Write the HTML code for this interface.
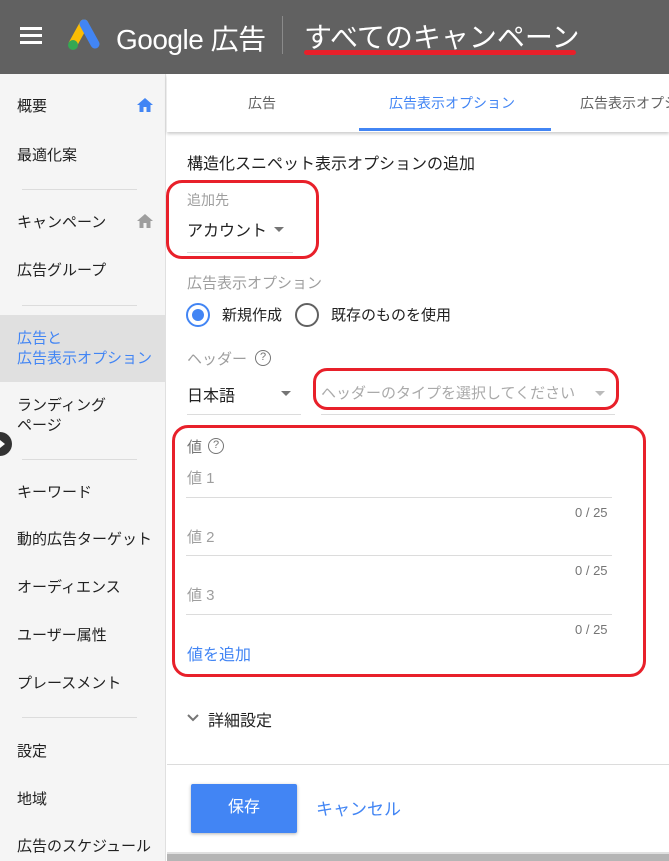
<!DOCTYPE html>
<html><head><meta charset="utf-8">
<style>
*{margin:0;padding:0;box-sizing:border-box}
html,body{overflow:hidden}
body{width:669px;height:861px;position:relative;background:#fff;font-family:"Liberation Sans","Noto Sans CJK JP",sans-serif;color:#212121}
.a{position:absolute;white-space:nowrap}
#hdr{left:0;top:0;width:669px;height:74px;background:#616161}
#side{left:0;top:74px;width:166px;height:787px;background:#f5f5f5;border-right:1px solid #e0e0e0}
.si{position:absolute;left:17px;font-size:15px;color:#212121;line-height:20px}
.hr{position:absolute;left:22px;width:115px;height:1px;background:#dcdcdc}
.red{position:absolute;border:3px solid #e8202a;border-radius:16px}
.ul{position:absolute;height:1px;background:#dcdcdc}
.cnt{font-size:13px;color:#757575}
</style></head><body>
<div id="hdr" class="a">
  <div class="a" style="left:20px;top:27px;width:22px;height:3px;background:#fff"></div>
  <div class="a" style="left:20px;top:34px;width:22px;height:3px;background:#fff"></div>
  <div class="a" style="left:20px;top:41px;width:22px;height:3px;background:#fff"></div>
  <svg class="a" style="left:64px;top:18px" width="38" height="34" viewBox="0 0 38 34">
    <line x1="20" y1="6" x2="9" y2="26" stroke="#fbbc04" stroke-width="9" stroke-linecap="round"/>
    <line x1="20" y1="6" x2="31" y2="26" stroke="#4285f4" stroke-width="9" stroke-linecap="round"/>
    <circle cx="9" cy="27" r="5" fill="#34a853"/>
  </svg>
  <div class="a" style="left:116px;top:18px;font-size:28px;color:#fff;letter-spacing:-0.5px">Google 広告</div>
  <div class="a" style="left:282px;top:16px;width:1px;height:38px;background:#8a8a8a"></div>
  <div class="a" style="left:304px;top:16px;font-size:28px;color:#fff">すべてのキャンペーン</div>
  <div class="a" style="left:304px;top:50px;width:272px;height:5px;background:#e8202a;border-radius:3px"></div>
</div>
<div id="side" class="a">
  <div class="si" style="top:23px">概要</div>
  <svg class="a" style="left:136px;top:23px" width="18" height="16" viewBox="0 0 18 16"><path d="M9 1L1 8h2.5v7h4v-5h3v5h4V8H17z" fill="#4285f4"/></svg>
  <div class="si" style="top:72px">最適化案</div>
  <div class="hr" style="top:115px"></div>
  <div class="si" style="top:139px">キャンペーン</div>
  <svg class="a" style="left:136px;top:139px" width="18" height="16" viewBox="0 0 18 16"><path d="M9 1L1 8h2.5v7h4v-5h3v5h4V8H17z" fill="#9e9e9e"/></svg>
  <div class="si" style="top:187px">広告グループ</div>
  <div class="hr" style="top:231px"></div>
  <div class="a" style="left:0;top:241px;width:165px;height:67px;background:#e0e0e0"></div>
  <div class="si" style="top:255px;color:#4285f4">広告と<br>広告表示オプション</div>
  <div class="si" style="top:322px">ランディング<br>ページ</div>
  <div class="hr" style="top:385px"></div>
  <div class="si" style="top:409px">キーワード</div>
  <div class="si" style="top:456px">動的広告ターゲット</div>
  <div class="si" style="top:504px">オーディエンス</div>
  <div class="si" style="top:552px">ユーザー属性</div>
  <div class="si" style="top:600px">プレースメント</div>
  <div class="hr" style="top:643px"></div>
  <div class="si" style="top:668px">設定</div>
  <div class="si" style="top:716px">地域</div>
  <div class="si" style="top:763px">広告のスケジュール</div>
</div>
<div class="a" style="left:-12px;top:432px;width:24px;height:24px;border-radius:50%;background:#333"></div>
<div class="a" style="left:0;top:440px;width:0;height:0;border-top:4px solid transparent;border-bottom:4px solid transparent;border-left:5px solid #fff"></div>
<!-- tabs -->
<div class="a" style="left:167px;top:74px;width:502px;height:58px;background:#fff;box-shadow:0 2px 3px rgba(0,0,0,.2);overflow:hidden">
  <div class="a" style="left:81px;top:19px;font-size:14px;color:#616161">広告</div>
  <div class="a" style="left:222px;top:19px;font-size:14px;color:#4285f4">広告表示オプション</div>
  <div class="a" style="left:192px;top:54px;width:192px;height:3px;background:#4285f4"></div>
  <div class="a" style="left:413px;top:19px;font-size:14px;color:#616161">広告表示オプション</div>
</div>
<!-- form -->
<div class="a" style="left:187px;top:150px;font-size:16px">構造化スニペット表示オプションの追加</div>
<div class="red" style="left:166px;top:180px;width:153px;height:79px"></div>
<div class="a" style="left:187px;top:190px;font-size:14px;color:#9e9e9e">追加先</div>
<div class="a" style="left:187px;top:217px;font-size:16px">アカウント</div>
<div class="a" style="left:274px;top:227px;border-left:5px solid transparent;border-right:5px solid transparent;border-top:5px solid #757575"></div>
<div class="ul" style="left:187px;top:252px;width:106px"></div>
<div class="a" style="left:187px;top:272px;font-size:15px;color:#9e9e9e">広告表示オプション</div>
<div class="a" style="left:186px;top:303px;width:24px;height:24px;border-radius:50%;border:2px solid #4285f4"></div>
<div class="a" style="left:192px;top:309px;width:12px;height:12px;border-radius:50%;background:#4285f4"></div>
<div class="a" style="left:222px;top:304px;font-size:15px">新規作成</div>
<div class="a" style="left:295px;top:303px;width:24px;height:24px;border-radius:50%;border:2px solid #616161"></div>
<div class="a" style="left:331px;top:304px;font-size:15px">既存のものを使用</div>
<div class="a" style="left:187px;top:348px;font-size:15px;color:#9e9e9e">ヘッダー</div>
<div class="a" style="left:255px;top:350px;width:16px;height:16px;border-radius:50%;border:1.5px solid #757575;font-size:11px;color:#757575;text-align:center;line-height:13px">?</div>
<div class="a" style="left:187px;top:382px;font-size:16px">日本語</div>
<div class="a" style="left:281px;top:391px;border-left:5px solid transparent;border-right:5px solid transparent;border-top:5px solid #757575"></div>
<div class="ul" style="left:187px;top:414px;width:114px"></div>
<div class="red" style="left:313px;top:368px;width:306px;height:42px;border-radius:14px"></div>
<div class="a" style="left:321px;top:382px;font-size:15px;color:#aaa">ヘッダーのタイプを選択してください</div>
<div class="a" style="left:595px;top:391px;border-left:5px solid transparent;border-right:5px solid transparent;border-top:5px solid #bbb"></div>
<div class="ul" style="left:321px;top:414px;width:294px"></div>
<div class="red" style="left:172px;top:425px;width:474px;height:252px"></div>
<div class="a" style="left:187px;top:436px;font-size:15px;color:#757575">値</div>
<div class="a" style="left:208px;top:438px;width:16px;height:16px;border-radius:50%;border:1.5px solid #757575;font-size:11px;color:#757575;text-align:center;line-height:13px">?</div>
<div class="a" style="left:187px;top:467px;font-size:15px;color:#9e9e9e">値 1</div>
<div class="ul" style="left:186px;top:497px;width:426px"></div>
<div class="a cnt" style="left:575px;top:505px">0 / 25</div>
<div class="a" style="left:187px;top:526px;font-size:15px;color:#9e9e9e">値 2</div>
<div class="ul" style="left:186px;top:555px;width:426px"></div>
<div class="a cnt" style="left:575px;top:563px">0 / 25</div>
<div class="a" style="left:187px;top:584px;font-size:15px;color:#9e9e9e">値 3</div>
<div class="ul" style="left:186px;top:614px;width:426px"></div>
<div class="a cnt" style="left:575px;top:622px">0 / 25</div>
<div class="a" style="left:187px;top:641px;font-size:16px;color:#4285f4">値を追加</div>
<svg class="a" style="left:186px;top:713px" width="14" height="10" viewBox="0 0 14 10"><path d="M2 2l5 5 5-5" stroke="#757575" stroke-width="2" fill="none"/></svg>
<div class="a" style="left:208px;top:707px;font-size:16px">詳細設定</div>
<div class="ul" style="left:167px;top:764px;width:502px"></div>
<div class="a" style="left:191px;top:784px;width:106px;height:49px;background:#4285f4;border-radius:2px;box-shadow:0 1px 3px rgba(0,0,0,.3);color:#fff;font-size:16px;text-align:center;line-height:47px">保存</div>
<div class="a" style="left:316px;top:795px;font-size:17px;color:#4285f4">キャンセル</div>
<div class="a" style="left:167px;top:852px;width:502px;height:9px;background:#b5b5b5;border-top:2px solid #e0e0e0"></div>
</body></html>
